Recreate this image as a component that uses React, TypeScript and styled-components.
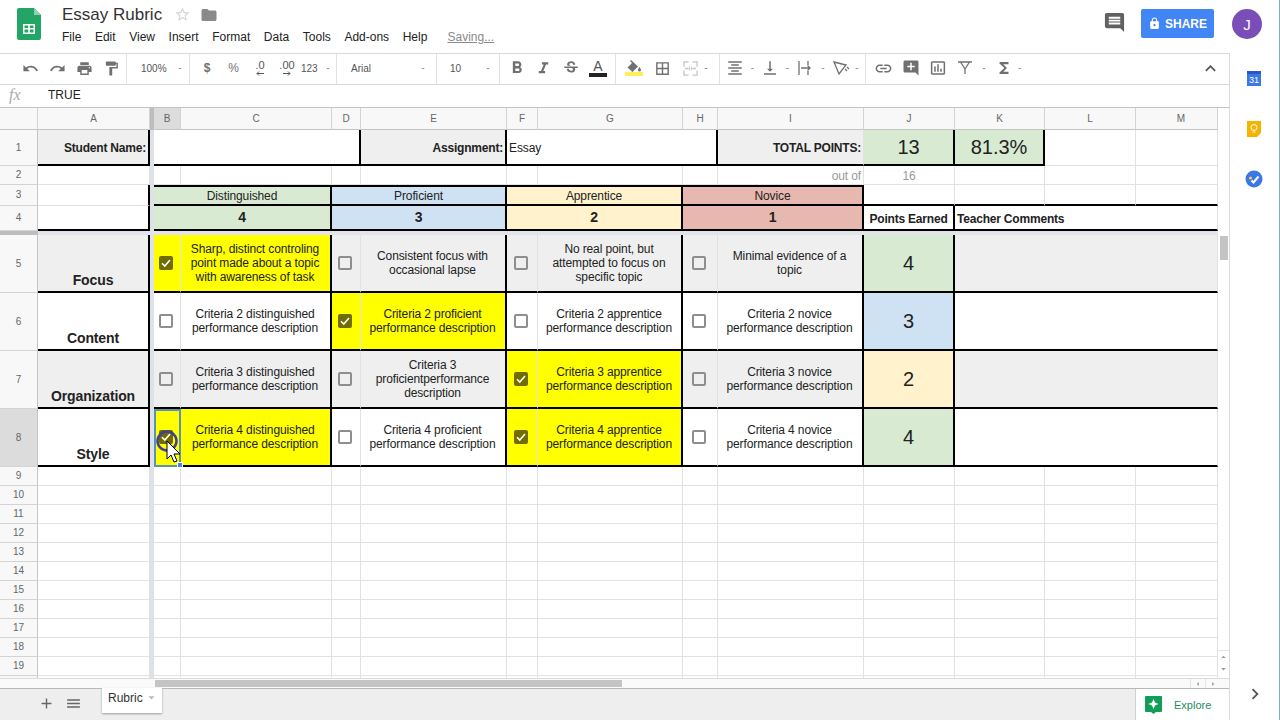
import React from 'react';
import styled, { createGlobalStyle } from 'styled-components';
import {
  MdUndo, MdRedo, MdPrint, MdFormatPaint, MdFormatBold, MdFormatItalic, MdStrikethroughS,
  MdBorderAll, MdFormatAlignCenter, MdVerticalAlignBottom, MdLink, MdAddComment,
  MdInsertChartOutlined, MdFunctions, MdExpandLess, MdLock, MdInsertComment, MdAdd, MdMenu,
  MdStarBorder, MdFolder, MdChevronRight, MdArrowDropDown, MdArrowDropUp, MdArrowLeft, MdArrowRight,
} from 'react-icons/md';

const GlobalStyle = createGlobalStyle`
  html, body {
    margin: 0;
    padding: 0;
    width: 1280px;
    height: 720px;
    overflow: hidden;
    background: #fff;
    font-family: "Liberation Sans", Arial, sans-serif;
    color: #222;
  }
`;

const Page = styled.div`
  width: 1280px;
  height: 720px;
  display: flex;
  flex-direction: column;
  box-sizing: border-box;
  border-right: 1px solid #7fb0b0;
`;

/* title bar */
const TitleBar = styled.header`
  height: 53px;
  flex: none;
  display: flex;
  align-items: flex-start;
  padding: 8px 17px 0 17px;
  box-sizing: border-box;
`;

const Logo = styled.svg`
  width: 24px;
  height: 32px;
  flex: none;
  margin-right: 21px;
`;

const TitleBlock = styled.div`
  display: flex;
  flex-direction: column;
  flex: 1;
`;

const TitleRow = styled.div`
  display: flex;
  align-items: center;
  height: 15px;
  margin-top: -1px;
  color: #d4d4d4;
`;

const DocName = styled.div`
  font-size: 17px;
  color: #333;
  width: 112px;
`;

const FolderIcon = styled.span`
  display: flex;
  margin-left: 9px;
  color: #8a8a8a;
`;

const MenuRow = styled.nav`
  display: flex;
  gap: 13.6px;
  font-size: 12px;
  color: #222;
  margin-top: 8px;
`;

const SavingLink = styled.span`
  color: #8a8a8a;
  text-decoration: underline;
  margin-left: 6.5px;
`;

const CommentBtn = styled.span`
  display: flex;
  color: #616161;
  margin: 3px 15px 0 0;
`;

const ShareBtn = styled.div`
  width: 73px;
  height: 29px;
  margin-top: 1px;
  background: #4285f4;
  border-radius: 2px;
  color: #fff;
  font-size: 12px;
  font-weight: bold;
  display: flex;
  align-items: center;
  justify-content: center;
  gap: 4px;
`;

const Avatar = styled.div`
  width: 30px;
  height: 30px;
  margin: 1px 0 0 18px;
  border-radius: 50%;
  background: #7a4db8;
  color: #fff;
  font-size: 15px;
  display: flex;
  align-items: center;
  justify-content: center;
`;

/* workspace */
const Workspace = styled.div`
  flex: 1;
  display: flex;
  min-height: 0;
`;

const Main = styled.main`
  width: 1230px;
  flex: none;
  display: flex;
  flex-direction: column;
  box-sizing: border-box;
  border-right: 1px solid #dadada;
  border-top: 1px solid #dadada;
`;

const Side = styled.aside`
  flex: 1;
  display: flex;
  flex-direction: column;
  align-items: center;
  padding-top: 18px;
  position: relative;
`;

const CalendarIcon = styled.div`
  width: 14px;
  height: 15px;
  background: #3b78e7;
  border-top: 3px solid #2a56c6;
  box-sizing: border-box;
  color: #fff;
  font-size: 9px;
  line-height: 12px;
  text-align: center;
  margin-left: -1px;
`;

const KeepIcon = styled.svg`
  width: 14px;
  height: 16px;
  margin: 35px 0 0 -1px;
`;

const TasksIcon = styled.svg`
  width: 18px;
  height: 18px;
  margin: 33px 0 0 -1px;
`;

const SideToggle = styled.span`
  margin-top: auto;
  margin-bottom: 15px;
  display: flex;
  color: #555;
`;

/* toolbar */
const Toolbar = styled.div`
  height: 31px;
  flex: none;
  display: flex;
  align-items: center;
  border-bottom: 1px solid #dadada;
  box-sizing: border-box;
  color: #666;
`;

const ToolGroup = styled.div<{ $w: number; $pad?: number; $last?: boolean }>`
  width: ${(p) => p.$w}px;
  height: 100%;
  flex: none;
  display: flex;
  align-items: center;
  box-sizing: border-box;
  padding-left: ${(p) => p.$pad ?? 0}px;
  padding-bottom: 2px;
  border-right: ${(p) => (p.$last ? 'none' : '1px solid #e2e2e2')};
`;

const ToolBtn = styled.span<{ $w?: number }>`
  width: ${(p) => p.$w ?? 27}px;
  flex: none;
  display: flex;
  flex-direction: column;
  align-items: center;
  justify-content: center;
  font-size: 12px;
  color: #707070;
`;

const ToolText = styled.span<{ $w: number }>`
  width: ${(p) => p.$w}px;
  flex: none;
  font-size: 10px;
  color: #555;
`;

const Caret = styled.span<{ $w?: number }>`
  width: ${(p) => p.$w ?? 10}px;
  flex: none;
  text-align: center;
  font-size: 10px;
  color: #888;
  line-height: 10px;
`;

const ColorBar = styled.span<{ $color: string }>`
  display: block;
  width: 18px;
  height: 3px;
  background: ${(p) => p.$color};
  border-bottom: 1px solid ${(p) => p.$color};
`;

const LetterA = styled.span`
  font-size: 14px;
  line-height: 14px;
  color: #555;
`;

const DecimalBtn = styled.span`
  display: flex;
  flex-direction: column;
  align-items: center;
  font-size: 11px;
  line-height: 11px;
  color: #555;
`;

const Chevron = styled.span`
  margin-left: auto;
  margin-right: 7px;
  display: flex;
  color: #555;
`;

/* formula bar */
const FormulaBar = styled.div`
  height: 23px;
  flex: none;
  display: flex;
  align-items: center;
  padding-bottom: 2px;
  font-size: 12px;
  border-bottom: 1px solid #c4c4c4;
  box-sizing: border-box;
`;

const FxLabel = styled.span`
  width: 48px;
  padding-left: 9px;
  box-sizing: border-box;
  font-family: "Liberation Serif", serif;
  font-style: italic;
  font-size: 16px;
  color: #aaa;
`;

/* sheet */
const SheetArea = styled.div`
  height: 570px;
  flex: none;
  display: flex;
  overflow: hidden;
`;

const Grid = styled.div`
  width: 1218px;
  flex: none;
  display: grid;
  grid-template-columns: 38px 112px 4px 27px 151px 29px 146px 31px 145px 35px 146px 91px 90px 91px 82px;
  grid-template-rows: 22px 36px 19px 21px 25px 4px 58px 58px 58px 58px;
  grid-auto-rows: 19px;
  font-size: 12px;
  letter-spacing: -0.12px;
  line-height: 14px;
`;

const ColHead = styled.div<{ $active?: boolean; $shift?: number }>`
  background: ${(p) => (p.$active ? '#dcdcdc' : '#f8f8f8')};
  border-right: 1px solid #d4d4d4;
  border-bottom: 1px solid #c4c4c4;
  box-sizing: border-box;
  display: flex;
  align-items: center;
  justify-content: center;
  font-size: 10px;
  letter-spacing: 0;
  color: #666;
  padding-left: ${(p) => p.$shift ?? 0}px;
`;

const RowNum = styled(ColHead)`
  border-bottom-color: #d4d4d4;
  border-right-color: #c4c4c4;
`;

const Gutter = styled.div<{ $dark?: boolean }>`
  background: ${(p) => (p.$dark ? '#bdbdbd' : '#dfe1e8')};
`;

const FreezeBar = styled.div`
  grid-column: span 14;
  background: #e3e4ea;
`;

const Cell = styled.div<{
  $bg?: string;
  $span?: number;
  $right?: boolean;
  $bottom?: boolean;
  $top?: boolean;
  $align?: string;
}>`
  grid-column: span ${(p) => p.$span ?? 1};
  background: ${(p) => p.$bg ?? '#fff'};
  box-sizing: border-box;
  border-right: ${(p) => (p.$right ? '2px solid #000' : '1px solid #e2e2e2')};
  border-bottom: ${(p) => (p.$bottom ? '2px solid #000' : '1px solid #e2e2e2')};
  border-top: ${(p) => (p.$top ? '2px solid #000' : 'none')};
  display: flex;
  align-items: center;
  justify-content: ${(p) => p.$align ?? 'center'};
  text-align: center;
  position: relative;
  min-width: 0;
  white-space: nowrap;
`;

const Label = styled(Cell)`
  font-weight: bold;
  letter-spacing: -0.2px;
  padding: 1px 2px 0;
`;

const ColumnLabel = styled(Label)`
  padding-top: 3px;
`;

const Muted = styled(Cell)`
  color: #999;
  padding: 2px 2px 0;
`;

const Note = styled(Cell)`
  padding: 1px 3px 0 2px;
`;

const BigValue = styled(Cell)`
  font-size: 20px;
  letter-spacing: 0;
`;

const LevelNum = styled(Cell)`
  font-size: 14px;
  font-weight: bold;
  padding-bottom: 1px;
`;

const Criterion = styled(Cell)`
  font-size: 14px;
  font-weight: bold;
  align-items: flex-end;
  padding-bottom: 4px;
`;

const Descr = styled(Cell)`
  white-space: pre-line;
  padding: 0 7px 0 6px;
`;

const BoxCell = styled(Cell)<{ $selected?: boolean }>`
  padding-right: 2px;
  ${(p) => p.$selected && 'outline: 2px solid #5b93b8; outline-offset: -2px;'}
`;

const Check = styled.span<{ $on?: boolean }>`
  width: 14px;
  height: 14px;
  box-sizing: border-box;
  border-radius: 2px;
  border: 2px solid ${(p) => (p.$on ? '#706c00' : '#8e8e8e')};
  background: ${(p) => (p.$on ? '#706c00' : 'transparent')};
  display: flex;
  align-items: center;
  justify-content: center;
`;

const Handle = styled.span`
  position: absolute;
  right: -3px;
  bottom: -3px;
  width: 6px;
  height: 6px;
  background: #4a86e8;
  border: 1px solid #fff;
  box-sizing: border-box;
  z-index: 3;
`;

const CursorMark = styled.svg`
  position: absolute;
  left: 1px;
  top: 19px;
  width: 26px;
  height: 36px;
  z-index: 2;
`;

/* scrollbars */
const VScroll = styled.div`
  width: 11px;
  flex: none;
  display: flex;
  flex-direction: column;
  background: #fff;
  box-sizing: border-box;
`;

const VThumb = styled.div`
  height: 24px;
  margin: 128px 1px 0 2px;
  background: #c4c4c4;
`;

const VArrows = styled.div`
  margin-top: auto;
  margin-bottom: 3px;
  display: flex;
  flex-direction: column;
  color: #999;
  border-top: 1px solid #e4e4e4;
`;

const ArrowBox = styled.span`
  height: 12px;
  display: flex;
  align-items: center;
  justify-content: center;
  overflow: hidden;
`;

const HScroll = styled.div`
  height: 10px;
  flex: none;
  display: flex;
  align-items: center;
  background: #fafafa;
  border-top: 1px solid #dcdcdc;
  box-sizing: border-box;
`;

const HThumb = styled.div`
  width: 467px;
  height: 7px;
  margin-left: 155px;
  background: #c4c4c4;
`;

const HArrows = styled.div`
  margin-left: auto;
  margin-right: 9px;
  display: flex;
  color: #999;
`;

const HArrowBox = styled.span`
  width: 14px;
  display: flex;
  justify-content: center;
  border-left: 1px solid #e4e4e4;
`;

/* sheet tabs */
const TabBar = styled.div`
  flex: 1;
  display: flex;
  background: #eee;
  border-top: 1px solid #b8b8b8;
  position: relative;
`;

const TabTool = styled.span<{ $first?: boolean }>`
  width: 27px;
  height: 100%;
  margin-left: ${(p) => (p.$first ? 33 : 0)}px;
  display: flex;
  align-items: center;
  justify-content: center;
  color: #666;
  padding-bottom: 3px;
  box-sizing: border-box;
`;

const SheetTab = styled.div`
  width: 60px;
  height: 25px;
  margin: -1px 0 0 15px;
  background: #fff;
  box-shadow: 0 1px 2px rgba(0, 0, 0, 0.35);
  display: flex;
  align-items: center;
  font-size: 12px;
  color: #333;
  padding: 0 0 5px 6px;
  box-sizing: border-box;
  position: relative;
  z-index: 1;
`;

const TabCaret = styled.span`
  display: flex;
  color: #bbb;
  margin-left: 1px;
  margin-top: -2px;
`;

const ExploreBox = styled.div`
  margin-left: auto;
  width: 94px;
  background: #fff;
  border-left: 1px solid #d0d0d0;
  display: flex;
  align-items: center;
  gap: 12px;
  padding-left: 9px;
  box-sizing: border-box;
  font-size: 11px;
  color: #1e8e5e;
`;

type Row = {
  n: number;
  name: string;
  bg?: string;
  picked: number;
  texts: string[];
  score: number;
  scoreBg: string;
};

const GREEN = '#d9ead3';
const BLUE = '#cfe2f3';
const CREAM = '#fff2cc';
const RED = '#e6b8af';
const GREY = '#efefef';
const YELLOW = '#ffff00';

const LEVELS = [
  { name: 'Distinguished', pts: 4, bg: GREEN },
  { name: 'Proficient', pts: 3, bg: BLUE },
  { name: 'Apprentice', pts: 2, bg: CREAM },
  { name: 'Novice', pts: 1, bg: RED },
];

const ROWS: Row[] = [
  {
    n: 5, name: 'Focus', bg: GREY, picked: 0, score: 4, scoreBg: GREEN,
    texts: [
      'Sharp, distinct controling\npoint made about a topic\nwith awareness of task',
      'Consistent focus with\noccasional lapse',
      'No real point, but\nattempted to focus on\nspecific topic',
      'Minimal evidence of a\ntopic',
    ],
  },
  {
    n: 6, name: 'Content', picked: 1, score: 3, scoreBg: BLUE,
    texts: [
      'Criteria 2 distinguished\nperformance description',
      'Criteria 2 proficient\nperformance description',
      'Criteria 2 apprentice\nperformance description',
      'Criteria 2 novice\nperformance description',
    ],
  },
  {
    n: 7, name: 'Organization', bg: GREY, picked: 2, score: 2, scoreBg: CREAM,
    texts: [
      'Criteria 3 distinguished\nperformance description',
      'Criteria 3\nproficientperformance\ndescription',
      'Criteria 3 apprentice\nperformance description',
      'Criteria 3 novice\nperformance description',
    ],
  },
  {
    n: 8, name: 'Style', picked: 2, score: 4, scoreBg: GREEN,
    texts: [
      'Criteria 4 distinguished\nperformance description',
      'Criteria 4 proficient\nperformance description',
      'Criteria 4 apprentice\nperformance description',
      'Criteria 4 novice\nperformance description',
    ],
  },
];

const COLS = ['B', 'C', 'D', 'E', 'F', 'G', 'H', 'I', 'J', 'K', 'L', 'M'];

const CheckMark = () => (
  <svg width="10" height="10" viewBox="0 0 10 10" fill="none" stroke="#fff" strokeWidth="1.6">
    <path d="M1 5.2 L3.8 8 L9 2" />
  </svg>
);

const Plain = ({ count }: { count: number }) => (
  <>
    {Array.from({ length: count }).map((_, i) => (
      <Cell key={i} />
    ))}
  </>
);

const MergeIcon = () => (
  <svg width="15" height="15" viewBox="0 0 16 16" fill="none" stroke="#c6c6c6" strokeWidth="1.4">
    <path d="M1 6V1h5M10 1h5v5M15 10v5h-5M6 15H1v-5" />
    <path d="M2 8h4M14 8h-4" />
    <path d="M7 6v4M9 6v4" strokeWidth="1" />
  </svg>
);

const WrapIcon = () => (
  <svg width="16" height="16" viewBox="0 0 16 16" fill="none" stroke="#707070" strokeWidth="1.3">
    <path d="M2 1v14M11 1v4M11 11v4M4 8h9M10.500 5.500 13 8l-2.500 2.500" />
  </svg>
);

const RotateIcon = () => (
  <svg width="18" height="16" viewBox="0 0 18 16" fill="none" stroke="#707070" strokeWidth="1.3">
    <path d="M2 2 L14 5 L7 14 Z" />
    <path d="M13 9l2 2M15 7l2 2" />
  </svg>
);

const FilterIcon = () => (
  <svg width="16" height="16" viewBox="0 0 16 16" fill="none" stroke="#707070" strokeWidth="1.3">
    <path d="M1 2h14M3.500 2 8 9v5M12.500 2 8 9" />
  </svg>
);

const FillIcon = () => (
  <svg width="16" height="12" viewBox="0 0 16 12" fill="#707070">
    <path d="M5 0 4 1l2 2-4.500 4.500 5 4.500 5.500-5.500z" />
    <path d="M13.500 7s-1.500 2-1.500 3a1.500 1.500 0 0 0 3 0c0-1-1.500-3-1.500-3z" />
  </svg>
);

const SmallArrow = ({ right }: { right?: boolean }) => (
  <svg width="8" height="5" viewBox="0 0 8 5" fill="none" stroke="#555" strokeWidth="1">
    {right ? <path d="M0 2.500h7M5 .5l2 2-2 2" /> : <path d="M8 2.500H1M3 .5l-2 2 2 2" />}
  </svg>
);

export default function App() {
  return (
    <Page>
      <GlobalStyle />
      <TitleBar>
        <Logo viewBox="0 0 24 32">
          <path d="M2 0h15l7 7v23a2 2 0 0 1-2 2H2a2 2 0 0 1-2-2V2a2 2 0 0 1 2-2z" fill="#23a566" />
          <path d="M17 0l7 7h-7z" fill="#8ed1b1" />
          <path d="M6 16h12v10H6z M7.500 17.500v2.500h3.700v-2.500z M12.800 17.500v2.500h3.700v-2.500z M7.500 21.500v3h3.700v-3z M12.800 21.500v3h3.700v-3z" fill="#fff" fillRule="evenodd" />
        </Logo>
        <TitleBlock>
          <TitleRow>
            <DocName>Essay Rubric</DocName>
            <MdStarBorder size={17} />
            <FolderIcon><MdFolder size={18} /></FolderIcon>
          </TitleRow>
          <MenuRow>
            <span>File</span>
            <span>Edit</span>
            <span>View</span>
            <span>Insert</span>
            <span>Format</span>
            <span>Data</span>
            <span>Tools</span>
            <span>Add-ons</span>
            <span>Help</span>
            <SavingLink>Saving...</SavingLink>
          </MenuRow>
        </TitleBlock>
        <CommentBtn><MdInsertComment size={23} /></CommentBtn>
        <ShareBtn><MdLock size={13} />SHARE</ShareBtn>
        <Avatar>J</Avatar>
      </TitleBar>

      <Workspace>
        <Main>
          <Toolbar>
            <ToolGroup $w={127} $pad={17}>
              <ToolBtn><MdUndo size={17} /></ToolBtn>
              <ToolBtn><MdRedo size={17} /></ToolBtn>
              <ToolBtn><MdPrint size={17} /></ToolBtn>
              <ToolBtn><MdFormatPaint size={17} /></ToolBtn>
            </ToolGroup>
            <ToolGroup $w={63} $pad={14}>
              <ToolText $w={34}>100%</ToolText>
              <Caret>-</Caret>
            </ToolGroup>
            <ToolGroup $w={147} $pad={4}>
              <ToolBtn $w={26}><b>$</b></ToolBtn>
              <ToolBtn>%</ToolBtn>
              <ToolBtn $w={26}><DecimalBtn>.0<SmallArrow /></DecimalBtn></ToolBtn>
              <ToolBtn $w={28}><DecimalBtn>.00<SmallArrow right /></DecimalBtn></ToolBtn>
              <ToolBtn $w={22}><ToolText $w={22}>123</ToolText></ToolBtn>
              <Caret>-</Caret>
            </ToolGroup>
            <ToolGroup $w={100} $pad={14}>
              <ToolText $w={67}>Arial</ToolText>
              <Caret>-</Caret>
            </ToolGroup>
            <ToolGroup $w={63} $pad={13}>
              <ToolText $w={33}>10</ToolText>
              <Caret>-</Caret>
            </ToolGroup>
            <ToolGroup $w={116} $pad={3}>
              <ToolBtn><MdFormatBold size={20} /></ToolBtn>
              <ToolBtn><MdFormatItalic size={19} /></ToolBtn>
              <ToolBtn><MdStrikethroughS size={18} /></ToolBtn>
              <ToolBtn $w={28}><LetterA>A</LetterA><ColorBar $color="#222" /></ToolBtn>
            </ToolGroup>
            <ToolGroup $w={104} $pad={4}>
              <ToolBtn><FillIcon /><ColorBar $color="#ffee58" /></ToolBtn>
              <ToolBtn $w={31}><MdBorderAll size={17} /></ToolBtn>
              <ToolBtn $w={25}><MergeIcon /></ToolBtn>
              <Caret $w={6}>-</Caret>
            </ToolGroup>
            <ToolGroup $w={146} $pad={5}>
              <ToolBtn $w={20}><MdFormatAlignCenter size={18} /></ToolBtn>
              <Caret $w={15}>-</Caret>
              <ToolBtn $w={20}><MdVerticalAlignBottom size={18} /></ToolBtn>
              <Caret $w={15}>-</Caret>
              <ToolBtn $w={20}><WrapIcon /></ToolBtn>
              <Caret $w={16}>-</Caret>
              <ToolBtn $w={20}><RotateIcon /></ToolBtn>
              <Caret $w={12}>-</Caret>
            </ToolGroup>
            <ToolGroup $w={362} $pad={4} $last>
              <ToolBtn><MdLink size={19} /></ToolBtn>
              <ToolBtn><MdAddComment size={18} /></ToolBtn>
              <ToolBtn><MdInsertChartOutlined size={18} /></ToolBtn>
              <ToolBtn><FilterIcon /></ToolBtn>
              <Caret $w={12}>-</Caret>
              <ToolBtn $w={28}><MdFunctions size={18} /></ToolBtn>
              <Caret $w={2}>-</Caret>
              <Chevron><MdExpandLess size={21} /></Chevron>
            </ToolGroup>
          </Toolbar>

          <FormulaBar>
            <FxLabel>fx</FxLabel>
            <span>TRUE</span>
          </FormulaBar>

          <SheetArea>
            <Grid>
              <ColHead />
              <ColHead>A</ColHead>
              <Gutter $dark />
              {COLS.map((c) => (
                <ColHead key={c} $active={c === 'B'} $shift={c === 'M' ? 9 : 0}>{c}</ColHead>
              ))}

              <RowNum>1</RowNum>
              <Label $bg={GREY} $align="flex-end" $right $bottom>Student Name:</Label>
              <Gutter />
              <Cell $span={3} $right $bottom />
              <Label $bg={GREY} $align="flex-end" $right $bottom>Assignment:</Label>
              <Note $span={3} $align="flex-start" $right $bottom>Essay</Note>
              <Label $bg={GREY} $align="flex-end" $bottom>TOTAL POINTS:</Label>
              <BigValue $bg={GREEN} $right $bottom>13</BigValue>
              <BigValue $bg={GREEN} $right $bottom>81.3%</BigValue>
              <Plain count={2} />

              <RowNum>2</RowNum>
              <Cell />
              <Gutter />
              <Plain count={7} />
              <Muted $align="flex-end">out of</Muted>
              <Muted>16</Muted>
              <Plain count={3} />

              <RowNum>3</RowNum>
              <Cell $right />
              <Gutter />
              {LEVELS.map((l) => (
                <Cell key={l.name} $span={2} $bg={l.bg} $top $bottom $right>{l.name}</Cell>
              ))}
              <Cell $bottom />
              <Cell $bottom />
              <Cell $bottom />
              <Cell $bottom />

              <RowNum>4</RowNum>
              <Cell $right $bottom />
              <Gutter />
              {LEVELS.map((l) => (
                <LevelNum key={l.pts} $span={2} $bg={l.bg} $bottom $right>{l.pts}</LevelNum>
              ))}
              <ColumnLabel $right $bottom>Points Earned</ColumnLabel>
              <ColumnLabel $span={3} $align="flex-start" $bottom>Teacher Comments</ColumnLabel>

              <Gutter $dark />
              <FreezeBar />

              {ROWS.map((r) => (
                <React.Fragment key={r.n}>
                  <RowNum $active={r.n === 8}>{r.n}</RowNum>
                  <Criterion $bg={r.bg} $right $bottom>{r.name}</Criterion>
                  <Gutter />
                  {r.texts.map((t, i) => {
                    const on = i === r.picked || (r.n === 8 && i === 0);
                    const bg = on ? YELLOW : r.bg;
                    const selected = r.n === 8 && i === 0;
                    return (
                      <React.Fragment key={i}>
                        <BoxCell $bg={bg} $bottom $selected={selected}>
                          <Check $on={on}>{on && <CheckMark />}</Check>
                          {selected && (
                            <>
                              <CursorMark viewBox="0 0 26 36">
                                <circle cx="12" cy="13" r="9.500" fill="none" stroke="#3f3f9f" strokeWidth="2.500" />
                                <path d="M12 13v18l4-4 3 7 3-1-3-7h6z" fill="#fff" stroke="#000" strokeWidth="1" />
                              </CursorMark>
                              <Handle />
                            </>
                          )}
                        </BoxCell>
                        <Descr $bg={bg} $right $bottom>{t}</Descr>
                      </React.Fragment>
                    );
                  })}
                  <BigValue $bg={r.scoreBg} $right $bottom>{r.score}</BigValue>
                  <Cell $span={3} $bg={r.bg} $bottom />
                </React.Fragment>
              ))}

              {Array.from({ length: 12 }).map((_, i) => (
                <React.Fragment key={i}>
                  <RowNum>{i < 11 ? i + 9 : ''}</RowNum>
                  <Cell />
                  <Gutter />
                  <Plain count={12} />
                </React.Fragment>
              ))}
            </Grid>
            <VScroll>
              <VThumb />
              <VArrows>
                <ArrowBox><MdArrowDropUp size={14} /></ArrowBox>
                <ArrowBox><MdArrowDropDown size={14} /></ArrowBox>
              </VArrows>
            </VScroll>
          </SheetArea>

          <HScroll>
            <HThumb />
            <HArrows>
              <HArrowBox><MdArrowLeft size={10} /></HArrowBox>
              <HArrowBox><MdArrowRight size={10} /></HArrowBox>
            </HArrows>
          </HScroll>

          <TabBar>
            <TabTool $first><MdAdd size={17} /></TabTool>
            <TabTool><MdMenu size={17} /></TabTool>
            <SheetTab>
              Rubric
              <TabCaret><MdArrowDropDown size={15} /></TabCaret>
            </SheetTab>
            <ExploreBox>
              <svg width="17" height="18" viewBox="0 0 17 18">
                <path d="M1 0h15a1 1 0 0 1 1 1v14a1 1 0 0 1-1 1h-5l-2.500 2L6 16H1a1 1 0 0 1-1-1V1a1 1 0 0 1 1-1z" fill="#0f9d58" />
                <path d="M8.500 3l1.500 3.500L13.500 8 10 9.500 8.500 13 7 9.500 3.500 8 7 6.500z" fill="#fff" />
              </svg>
              Explore
            </ExploreBox>
          </TabBar>
        </Main>

        <Side>
          <CalendarIcon>31</CalendarIcon>
          <KeepIcon viewBox="0 0 14 16">
            <path d="M0 0h14v12l-4 4H0z" fill="#f4b400" />
            <circle cx="7" cy="6.500" r="3" fill="none" stroke="#fff" strokeWidth="1" />
            <path d="M5.500 11h3" stroke="#fff" strokeWidth="1" />
          </KeepIcon>
          <TasksIcon viewBox="0 0 18 18">
            <circle cx="9" cy="9" r="8.500" fill="#3b78e7" />
            <path d="M6.500 10.500l2 2 5-6" fill="none" stroke="#fff" strokeWidth="2" />
            <circle cx="5.500" cy="8" r="1.600" fill="#f4d03f" />
          </TasksIcon>
          <SideToggle><MdChevronRight size={22} /></SideToggle>
        </Side>
      </Workspace>
    </Page>
  );
}
